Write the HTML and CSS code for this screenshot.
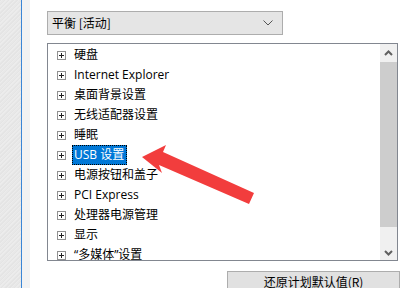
FILE: index.html
```html
<!DOCTYPE html>
<html>
<head>
<meta charset="utf-8">
<link rel="stylesheet" href="styles.css">
</head>
<body>
<div class="window">
  <div class="side"></div>
  <div class="sep"></div>
  <div class="gutter"></div>
  <div class="main">
    <div class="combo">
      <span class="combo-text">平衡 [活动]</span>
      <svg class="combo-chev" width="10" height="6" viewBox="0 0 10 6"><path d="M0.5 0.5 L5 5 L9.5 0.5" fill="none" stroke="#555" stroke-width="1"/></svg>
    </div>
    <div class="listbox">
      <ul class="tree">
        <li class="row"><span class="pm"></span><span class="lbl">硬盘</span></li>
        <li class="row"><span class="pm"></span><span class="lbl">Internet Explorer</span></li>
        <li class="row"><span class="pm"></span><span class="lbl">桌面背景设置</span></li>
        <li class="row"><span class="pm"></span><span class="lbl">无线适配器设置</span></li>
        <li class="row"><span class="pm"></span><span class="lbl">睡眠</span></li>
        <li class="row"><span class="pm"></span><span class="lbl sel">USB 设置</span></li>
        <li class="row"><span class="pm"></span><span class="lbl">电源按钮和盖子</span></li>
        <li class="row"><span class="pm"></span><span class="lbl">PCI Express</span></li>
        <li class="row"><span class="pm"></span><span class="lbl">处理器电源管理</span></li>
        <li class="row"><span class="pm"></span><span class="lbl">显示</span></li>
        <li class="row"><span class="pm"></span><span class="lbl">“多媒体”设置</span></li>
      </ul>
      <div class="vscroll">
        <div class="sbtn"><svg width="9" height="6" viewBox="0 0 9 6"><path d="M1 5 L4.5 1.5 L8 5" fill="none" stroke="#606060" stroke-width="2"/></svg></div>
        <div class="thumb"></div>
        <div class="sbtn sbtn-down"><svg width="9" height="6" viewBox="0 0 9 6"><path d="M1 1 L4.5 4.5 L8 1" fill="none" stroke="#606060" stroke-width="2"/></svg></div>
      </div>
    </div>
    <div class="actions">
      <button class="btn">还原计划默认值(R)</button>
    </div>
    <svg class="arrow" width="130" height="70" viewBox="0 0 130 70">
      <polygon points="0,14 24,2 21,9 112,50 107,61 17,22 20,30" fill="#f23d3d"/>
    </svg>
  </div>
</div>
</body>
</html>
```
FILE: styles.css
```css
html, body {
  margin: 0;
  padding: 0;
  background: #fff;
}
body {
  width: 411px;
  height: 288px;
  overflow: hidden;
  font-family: "Noto Sans CJK SC", "Noto Sans", sans-serif;
  font-size: 12px;
  color: #000;
}
.window {
  display: flex;
  height: 288px;
}
.side {
  width: 21px;
  background: repeating-linear-gradient(135deg, #e4e4e4 0 1px, #ececec 1px 2px, #e8e8e8 2px 3px);
}
.sep {
  width: 1px;
  background: #3b86d6;
}
.gutter {
  width: 8px;
  background: #f2f2f2;
}
.main {
  position: relative;
  flex: 1;
  padding: 11px 0 0 17px;
}
.combo {
  box-sizing: border-box;
  width: 236px;
  height: 24px;
  background: #e5e5e5;
  border: 1px solid #adadad;
  display: flex;
  align-items: center;
  justify-content: space-between;
  padding: 0 9px 0 4px;
}
.combo-text {
  font-size: 12px;
  line-height: 16px;
}
.listbox {
  box-sizing: border-box;
  margin-top: 8px;
  width: 351px;
  height: 218px;
  border: 1px solid #828790;
  display: flex;
  overflow: hidden;
}
.tree {
  list-style: none;
  margin: 0;
  padding: 1px 0 0 9px;
  flex: 1;
  overflow: hidden;
  font-family: "Open Sans", "Noto Sans CJK SC", sans-serif;
}
.row {
  height: 20px;
  display: flex;
  align-items: center;
}
.pm {
  box-sizing: border-box;
  width: 9px;
  height: 9px;
  border: 1px solid #919191;
  position: relative;
  margin-right: 6px;
  flex: none;
  background: #fff;
}
.pm::before {
  content: "";
  position: absolute;
  left: 1px;
  top: 3px;
  width: 5px;
  height: 1px;
  background: #222;
}
.pm::after {
  content: "";
  position: absolute;
  left: 3px;
  top: 1px;
  width: 1px;
  height: 5px;
  background: #222;
}
.lbl {
  padding: 0 2px 0 1px;
  line-height: 18px;
  border: 1px solid transparent;
  white-space: nowrap;
}
.sel {
  background: #0078d7;
  color: #fff;
  border: 1px dotted #000;
}
.vscroll {
  width: 17px;
  background: #f0f0f0;
  display: flex;
  flex-direction: column;
}
.sbtn {
  height: 18px;
  display: flex;
  align-items: center;
  justify-content: center;
  flex: none;
}
.sbtn-down {
  height: 33px;
  align-items: flex-end;
  padding-bottom: 4px;
  box-sizing: border-box;
}
.thumb {
  flex: 1;
  background: #cdcdcd;
}
.actions {
  display: flex;
  justify-content: flex-end;
  width: 353px;
  margin-top: 10px;
}
.btn {
  box-sizing: border-box;
  width: 173px;
  height: 21px;
  background: #e1e1e1;
  border: 1px solid #adadad;
  font-family: "Noto Sans CJK SC", "Noto Sans", sans-serif;
  font-size: 12px;
  line-height: 16px;
  color: #000;
  padding: 0;
  margin: 0;
}
.arrow {
  position: absolute;
  left: 112px;
  top: 143px;
}
```
